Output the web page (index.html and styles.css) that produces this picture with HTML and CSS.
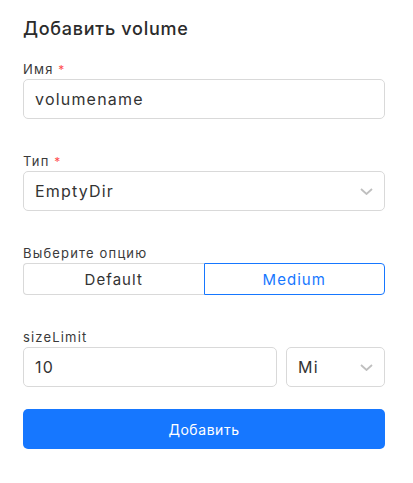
FILE: index.html
```html
<!DOCTYPE html>
<html lang="ru">
<head>
<meta charset="utf-8">
<title>Добавить volume</title>
<link rel="stylesheet" href="styles.css">
</head>
<body>
<div class="page">
  <h2 class="title">Добавить volume</h2>

  <div class="item">
    <div class="label">Имя <span class="req">*</span></div>
    <div class="input">volumename</div>
  </div>

  <div class="item">
    <div class="label">Тип <span class="req">*</span></div>
    <div class="input select">
      <span>EmptyDir</span>
      <svg class="chev" width="13" height="7" viewBox="0 0 13 7"><path d="M1 1l5.5 5 5.5-5" fill="none" stroke="#bfbfbf" stroke-width="1.8"/></svg>
    </div>
  </div>

  <div class="item">
    <div class="label">Выберите опцию</div>
    <div class="segmented">
      <div class="seg">Default</div>
      <div class="seg active">Medium</div>
    </div>
  </div>

  <div class="item last">
    <div class="label">sizeLimit</div>
    <div class="row">
      <div class="input grow">10</div>
      <div class="input select unit">
        <span>Mi</span>
        <svg class="chev" width="13" height="7" viewBox="0 0 13 7"><path d="M1 1l5.5 5 5.5-5" fill="none" stroke="#bfbfbf" stroke-width="1.8"/></svg>
      </div>
    </div>
  </div>

  <button class="btn">Добавить</button>
</div>
</body>
</html>
```

FILE: styles.css
```css
* { box-sizing: border-box; }
body {
  margin: 0;
  background: #fff;
  font-family: Inter, "Open Sans", "Liberation Sans", sans-serif;
  color: #333;
}
.page {
  padding: 16px 28px 0 23px;
}
.title {
  margin: 0 0 17px;
  font-size: 18px;
  line-height: 26px;
  font-weight: 500;
  letter-spacing: 0.04em;
  color: #2b2b2b;
}
.item { margin-bottom: 32px; }
.item.last { margin-bottom: 22px; }
.label {
  height: 20px;
  line-height: 20px;
  font-size: 13px;
  letter-spacing: 0.09em;
  color: #3a3a3a;
}
.req { color: #ff4d4f; font-size: 12px; }
.input {
  height: 40px;
  border: 1px solid #d9d9d9;
  border-radius: 5px;
  padding: 0 11px;
  display: flex;
  align-items: center;
  font-size: 16px;
  letter-spacing: 0.075em;
  color: #333;
}
.select { justify-content: space-between; }
.chev { margin-right: 0; }
.segmented {
  display: flex;
  height: 32px;
}
.seg {
  flex: 1;
  display: flex;
  align-items: center;
  justify-content: center;
  font-size: 15px;
  letter-spacing: 0.07em;
  color: #333;
  border: 1px solid #d9d9d9;
}
.seg:first-child {
  border-radius: 4px 0 0 4px;
  border-right: none;
}
.seg.active {
  border-color: #1677ff;
  color: #1677ff;
  border-radius: 0 4px 4px 0;
}
.row {
  display: flex;
  gap: 9px;
}
.grow { flex: 1; }
.unit { width: 99px; }
.btn {
  display: block;
  width: 100%;
  height: 40px;
  border: none;
  border-radius: 5px;
  background: #1677ff;
  color: #fff;
  font-family: inherit;
  font-size: 14px;
  letter-spacing: 0.04em;
}
```
